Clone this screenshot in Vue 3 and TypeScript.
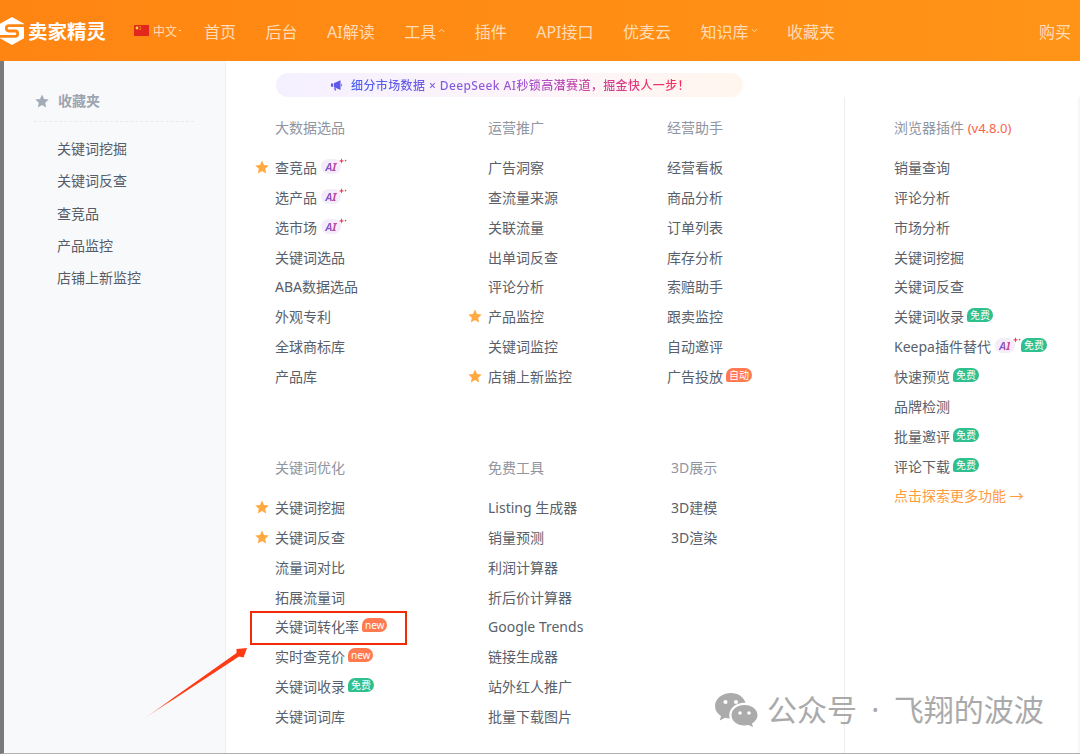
<script setup lang="ts">
type Badge = 'ai' | 'free' | 'new' | 'auto'

interface Item {
  name: string
  star?: boolean
  badges?: Badge[]
}

interface Group {
  title: string
  version?: string
  shift?: boolean
  items: Item[]
}

const navItems = [
  { name: '首页' },
  { name: '后台' },
  { name: 'AI解读' },
  { name: '工具', arrow: 'up' },
  { name: '插件' },
  { name: 'API接口' },
  { name: '优麦云' },
  { name: '知识库', arrow: 'down' },
  { name: '收藏夹' },
]

const favorites = ['关键词挖掘', '关键词反查', '查竞品', '产品监控', '店铺上新监控']

const groups: Group[] = [
  {
    title: '大数据选品',
    items: [
      { name: '查竞品', star: true, badges: ['ai'] },
      { name: '选产品', badges: ['ai'] },
      { name: '选市场', badges: ['ai'] },
      { name: '关键词选品' },
      { name: 'ABA数据选品' },
      { name: '外观专利' },
      { name: '全球商标库' },
      { name: '产品库' },
    ],
  },
  {
    title: '运营推广',
    items: [
      { name: '广告洞察' },
      { name: '查流量来源' },
      { name: '关联流量' },
      { name: '出单词反查' },
      { name: '评论分析' },
      { name: '产品监控', star: true },
      { name: '关键词监控' },
      { name: '店铺上新监控', star: true },
    ],
  },
  {
    title: '经营助手',
    items: [
      { name: '经营看板' },
      { name: '商品分析' },
      { name: '订单列表' },
      { name: '库存分析' },
      { name: '索赔助手' },
      { name: '跟卖监控' },
      { name: '自动邀评' },
      { name: '广告投放', badges: ['auto'] },
    ],
  },
  {
    title: '关键词优化',
    items: [
      { name: '关键词挖掘', star: true },
      { name: '关键词反查', star: true },
      { name: '流量词对比' },
      { name: '拓展流量词' },
      { name: '关键词转化率', badges: ['new'] },
      { name: '实时查竞价', badges: ['new'] },
      { name: '关键词收录', badges: ['free'] },
      { name: '关键词词库' },
    ],
  },
  {
    title: '免费工具',
    items: [
      { name: 'Listing 生成器' },
      { name: '销量预测' },
      { name: '利润计算器' },
      { name: '折后价计算器' },
      { name: 'Google Trends' },
      { name: '链接生成器' },
      { name: '站外红人推广' },
      { name: '批量下载图片' },
    ],
  },
  {
    title: '3D展示',
    shift: true,
    items: [{ name: '3D建模' }, { name: '3D渲染' }],
  },
]

const plugin: Group = {
  title: '浏览器插件',
  version: '(v4.8.0)',
  items: [
    { name: '销量查询' },
    { name: '评论分析' },
    { name: '市场分析' },
    { name: '关键词挖掘' },
    { name: '关键词反查' },
    { name: '关键词收录', badges: ['free'] },
    { name: 'Keepa插件替代', badges: ['ai', 'free'] },
    { name: '快速预览', badges: ['free'] },
    { name: '品牌检测' },
    { name: '批量邀评', badges: ['free'] },
    { name: '评论下载', badges: ['free'] },
  ],
}

const badgeText: Record<Badge, string> = {
  ai: 'AI',
  free: '免费',
  new: 'new',
  auto: '自动',
}

const starPath = 'M7 .6l2 4.3 4.7.6-3.5 3.2.9 4.7L7 11.1l-4.1 2.3.9-4.7L.3 5.5 5 4.9z'
</script>

<template>
  <div class="page">
    <header class="topbar">
      <div class="logo">
        <svg class="logo-mark" width="24" height="28" viewBox="0 0 24 28">
          <path d="M12 0l12 6.800v14.400L12 28 0 21.200V6.800z" fill="#fff" />
          <path
            d="M24 8.600H9a2.700 2.700 0 0 0 0 5.400h6a2.700 2.700 0 0 1 0 5.400H0"
            fill="none"
            stroke="#ff8613"
            stroke-width="2.800"
          />
        </svg>
        <span class="logo-text">卖家精灵</span>
      </div>
      <div class="lang">
        <svg width="15" height="11" viewBox="0 0 15 11">
          <rect width="15" height="11" fill="#e0291c" />
          <circle cx="3" cy="3" r="1.400" fill="#ffd83a" />
          <circle cx="6" cy="1.500" r=".5" fill="#ffd83a" />
          <circle cx="6.800" cy="3" r=".5" fill="#ffd83a" />
          <circle cx="6" cy="4.600" r=".5" fill="#ffd83a" />
        </svg>
        <span>中文</span>
        <i class="lang-dot"></i>
      </div>
      <nav class="nav">
        <a v-for="nav in navItems" :key="nav.name" class="nav-item">
          {{ nav.name }}
          <svg v-if="nav.arrow" class="nav-arrow" width="7" height="5" viewBox="0 0 7 5">
            <path
              :d="nav.arrow === 'up' ? 'M1 3.800l2.500-2.500L6 3.800' : 'M1 1.200l2.500 2.500L6 1.200'"
              fill="none"
              stroke="#ffdcb5"
              stroke-width="1"
            />
          </svg>
        </a>
      </nav>
      <a class="buy">购买</a>
    </header>

    <div class="body">
      <aside class="side">
        <div class="side-title">
          <svg width="14" height="14" viewBox="0 0 14 14"><path :d="starPath" fill="#a3aab8" /></svg>
          <span>收藏夹</span>
        </div>
        <a v-for="fav in favorites" :key="fav" class="side-item">{{ fav }}</a>
      </aside>

      <main class="main">
        <div class="notice">
          <svg width="12" height="11" viewBox="0 0 12 11">
            <path d="M0 3.500h2v3.200H0zM2.800 3.200L9.500.3v9.600L2.800 7zM3 7.400l1.600.6.6 2.400H3.800zM10.300 3.400c1.200.3 1.200 3 0 3.300z" fill="#5f57e8" />
          </svg>
          <span class="notice-text">细分市场数据 × DeepSeek AI秒锁高潜赛道，掘金快人一步！</span>
        </div>

        <div class="content">
          <div class="tools">
            <section v-for="group in groups" :key="group.title" class="group" :class="{ shifted: group.shift }">
              <h3 class="group-title">{{ group.title }}</h3>
              <a v-for="item in group.items" :key="item.name" class="row">
                <svg v-if="item.star" class="star" width="14" height="14" viewBox="0 0 14 14">
                  <path :d="starPath" fill="#ffa940" />
                </svg>
                <span>{{ item.name }}</span>
                <template v-for="badge in item.badges" :key="badge">
                  <span v-if="badge === 'ai'" class="badge-ai">
                    <b>{{ badgeText.ai }}</b>
                    <svg class="spark" width="9" height="8" viewBox="0 0 9 8">
                      <path d="M3.500 0l.7 2.200 2.200.7-2.200.7-.7 2.200-.7-2.200L.6 2.900l2.200-.7z" fill="#f5334a" />
                      <circle cx="7.600" cy="2.600" r=".8" fill="#f5334a" />
                    </svg>
                  </span>
                  <span v-else class="badge" :class="badge">{{ badgeText[badge] }}</span>
                </template>
              </a>
            </section>
          </div>

          <section class="plugin">
            <h3 class="group-title">{{ plugin.title }} <em>{{ plugin.version }}</em></h3>
            <a v-for="item in plugin.items" :key="item.name" class="row">
              <span>{{ item.name }}</span>
              <template v-for="badge in item.badges" :key="badge">
                <span v-if="badge === 'ai'" class="badge-ai">
                  <b>{{ badgeText.ai }}</b>
                  <svg class="spark" width="9" height="8" viewBox="0 0 9 8">
                    <path d="M3.500 0l.7 2.200 2.200.7-2.200.7-.7 2.200-.7-2.200L.6 2.900l2.200-.7z" fill="#f5334a" />
                    <circle cx="7.600" cy="2.600" r=".8" fill="#f5334a" />
                  </svg>
                </span>
                <span v-else class="badge" :class="badge">{{ badgeText[badge] }}</span>
              </template>
            </a>
            <a class="row more">点击探索更多功能 →</a>
          </section>
        </div>
      </main>
    </div>

    <!-- annotations drawn over the screenshot -->
    <div class="mark-box"></div>
    <svg class="mark-arrow" width="1080" height="754" viewBox="0 0 1080 754">
      <defs>
        <linearGradient id="tail" x1="142" y1="720" x2="247" y2="648" gradientUnits="userSpaceOnUse">
          <stop offset="0" stop-color="#ff3a14" stop-opacity="0" />
          <stop offset=".3" stop-color="#ff3a14" />
        </linearGradient>
      </defs>
      <path d="M142 720L236.500 653 236.500 649 247 648 243.500 657.500 239 656.500z" fill="url(#tail)" />
    </svg>

    <div class="watermark">
      <svg width="44" height="34" viewBox="0 0 44 34">
        <path d="M16 0C7.200 0 0 5.800 0 13c0 4.100 2.300 7.700 6 10.100L4.800 27.500 10 24.700c1.500.4 3.100.7 4.800.7-.3-1-.5-2.100-.5-3.200 0-6.900 6.700-12.400 15-12.400h1.200C29 4.200 23.100 0 16 0z" fill="#ababab" />
        <circle cx="10.500" cy="9" r="2.100" fill="#fff" />
        <circle cx="21" cy="9" r="2.100" fill="#fff" />
        <path d="M29.500 12C22 12 16.500 16.600 16.500 22.300s5.500 10.300 13 10.300c1.400 0 2.800-.2 4-.5l4.500 1.900-1-3.600c3.500-2 5.500-4.900 5.500-8.100C42.500 16.600 37 12 29.500 12z" fill="#ababab" />
        <circle cx="25" cy="20" r="1.800" fill="#fff" />
        <circle cx="34" cy="20" r="1.800" fill="#fff" />
      </svg>
      <span>公众号 · 飞翔的波波</span>
    </div>
  </div>
</template>

<style scoped>
.page {
  position: relative;
  width: 1080px;
  height: 754px;
  overflow: hidden;
  background: #fff;
  font-family: 'Noto Sans', 'Noto Sans CJK SC', sans-serif;
  font-size: 14px;
  color: #595f6b;
}

.topbar {
  height: 61px;
  display: flex;
  align-items: center;
  background: linear-gradient(90deg, #ff8512, #ff9417);
  color: #ffdcb5;
}

.logo {
  display: flex;
  align-items: center;
  gap: 4px;
  width: 134px;
}

.logo-text {
  font-size: 19.500px;
  font-weight: 700;
  color: #fff;
}

.lang {
  width: 70px;
  display: flex;
  align-items: center;
  gap: 4px;
  font-size: 12px;
}

.lang-dot {
  width: 2px;
  height: 1px;
  margin-left: -2px;
  background: #ffdcb5;
}

.nav {
  display: flex;
  gap: 29.500px;
  font-size: 16px;
}

.nav-item {
  display: flex;
  align-items: center;
}

.nav-arrow {
  margin-left: 2px;
}

.buy {
  margin-left: auto;
  margin-right: 9px;
  font-size: 16px;
}

.body {
  height: 693px;
  display: flex;
  box-sizing: border-box;
  border-left: 4px solid #7a7a7a;
  border-bottom: 1px solid #b0b0b0;
}

.side {
  width: 222px;
  flex-shrink: 0;
  box-sizing: border-box;
  padding: 30px 0 0 30px;
  background: #f8f9fb;
  border-right: 1px solid #eceef1;
}

.side-title {
  width: 160px;
  height: 30px;
  margin-bottom: 11px;
  display: flex;
  align-items: flex-start;
  gap: 9px;
  font-weight: 700;
  color: #9ea4b0;
  line-height: 20px;
  border-bottom: 1px dashed #e8eaee;
}

.side-title svg {
  margin: 3px 0 0 1px;
}

.side-item {
  display: block;
  height: 32.250px;
  line-height: 32.250px;
  padding-left: 23px;
  color: #565c68;
}

.main {
  flex: 1;
  min-width: 0;
}

.notice {
  width: 467px;
  height: 24px;
  margin: 12px 0 0 50px;
  display: flex;
  align-items: center;
  gap: 8px;
  box-sizing: border-box;
  padding-left: 55px;
  border-radius: 12px;
  background: linear-gradient(90deg, #f5f0ff, #fdf5f9 60%, #fff6ee);
}

.notice-text {
  font-size: 12px;
  font-weight: 500;
  letter-spacing: .4px;
  color: transparent;
  background: linear-gradient(90deg, #4c62f2, #a356d2 50%, #ff2a55);
  -webkit-background-clip: text;
  background-clip: text;
  white-space: nowrap;
}

.content {
  display: flex;
}

.tools {
  width: 618px;
  padding: 19px 0 0 49px;
  box-sizing: border-box;
  display: grid;
  grid-template-columns: 213px 179px 1fr;
  grid-auto-rows: 340px;
}

.group-title {
  margin: 0 0 12px;
  height: 24px;
  line-height: 24px;
  font-size: 14px;
  font-weight: 400;
  color: #8f95a1;
}

.group-title em {
  font-style: normal;
  font-size: 13px;
  color: #f8634c;
}

.shifted {
  padding-left: 4px;
}

.row {
  height: 29.860px;
  display: flex;
  align-items: center;
  white-space: nowrap;
}

.star {
  margin-left: -20px;
  margin-right: 6px;
}

.plugin {
  width: 236px;
  box-sizing: border-box;
  padding: 19px 0 0 49px;
  height: 656px;
  border-left: 1px solid #eceef1;
  border-right: 2px solid #f7f7f7;
}

.more {
  color: #ff9a3d;
}

.badge {
  height: 14px;
  line-height: 14px;
  margin: -2px 0 0 3px;
  padding: 0 3px;
  border-radius: 7px 7px 7px 2px;
  font-size: 10px;
  color: #fff;
}

.badge.free {
  background: #2fc08e;
}

.badge.new,
.badge.auto {
  background: #ff7a50;
}

.badge-ai {
  position: relative;
  width: 20px;
  height: 15px;
  margin: -1px 3px 0 4px;
  border-radius: 8px;
  background: #f4ecf8;
  text-align: center;
  line-height: 15px;
  font-size: 11px;
}

.badge-ai b {
  font-style: italic;
  color: transparent;
  background: linear-gradient(90deg, #6a5ae0, #d9468f);
  -webkit-background-clip: text;
  background-clip: text;
}

.spark {
  position: absolute;
  right: -6px;
  top: -1px;
}

.mark-box {
  position: absolute;
  left: 250px;
  top: 611px;
  width: 157px;
  height: 34px;
  box-sizing: border-box;
  border: 2.500px solid #f32a08;
}

.mark-arrow {
  position: absolute;
  left: 0;
  top: 0;
  pointer-events: none;
}

.watermark {
  position: absolute;
  left: 715px;
  top: 688px;
  display: flex;
  align-items: center;
  gap: 8px;
  font-size: 30px;
  line-height: 44px;
  word-spacing: 6.500px;
  color: #aaa;
  white-space: nowrap;
}
</style>

<style>
html,
body {
  margin: 0;
}
</style>
